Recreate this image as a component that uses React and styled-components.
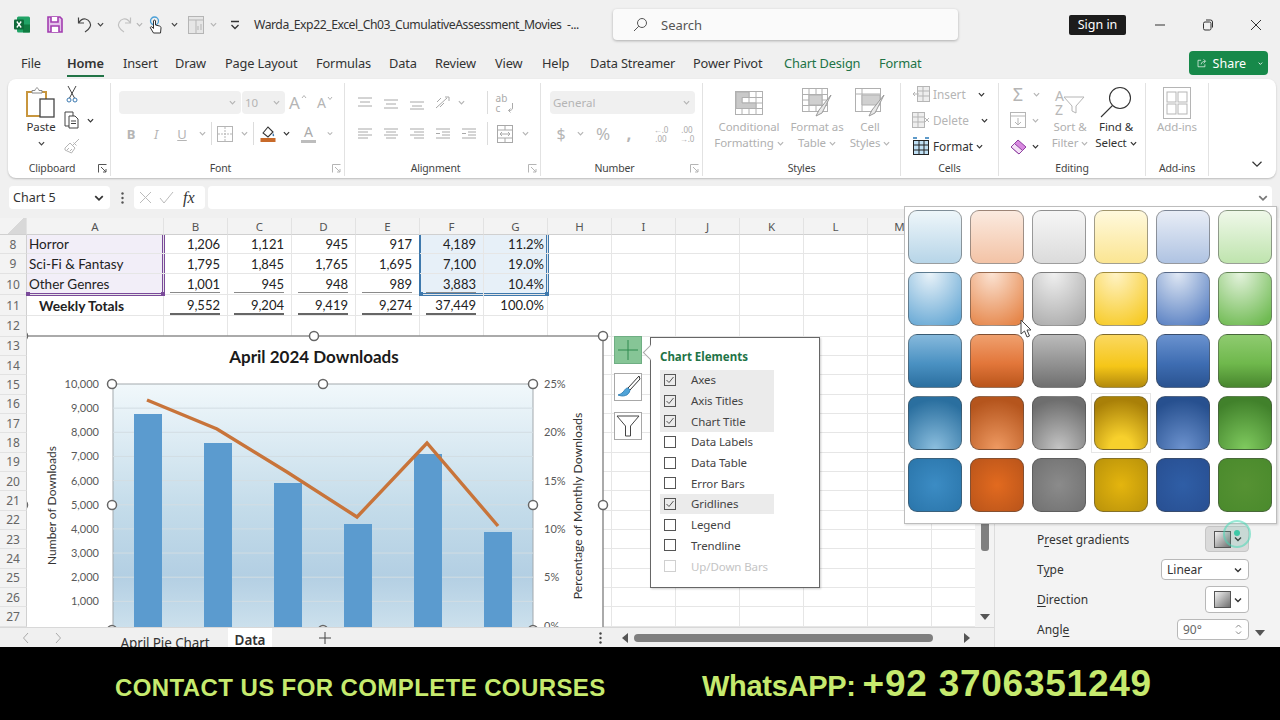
import React from 'react';
import styled, { createGlobalStyle } from 'styled-components';

const UI = '"Noto Sans", "Open Sans", sans-serif';
const CELL = 'Lato, "Noto Sans", sans-serif';

const GlobalStyle = createGlobalStyle`
  html, body { margin: 0; padding: 0; background: #000; }
  * { box-sizing: border-box; }
`;

const Page = styled.div`
  width: 1280px;
  height: 720px;
  position: relative;
  overflow: hidden;
  display: flex;
  flex-direction: column;
  background: #f0f0f0;
  font-family: ${UI};
  color: #333;
`;

/* ---------- title bar ---------- */
const TitleBar = styled.header`
  height: 46px;
  display: flex;
  align-items: center;
  padding: 3px 0 0 13px;
  flex: none;
`;
const Qat = styled.span`
  width: ${p => p.$w}px;
  margin-left: ${p => p.$ml || 0}px;
  flex: none;
  display: flex;
  align-items: center;
  justify-content: center;
`;
const DocName = styled.div`
  width: 359px;
  margin-left: 14px;
  flex: none;
  font-size: 12.2px;
  letter-spacing: -0.45px;
  color: #333;
  white-space: pre;
`;
const SearchBox = styled.div`
  width: 345px;
  height: 31px;
  flex: none;
  display: flex;
  align-items: center;
  gap: 13px;
  padding-left: 19px;
  background: #fafafa;
  border-radius: 4px;
  box-shadow: 0 1px 3px rgba(0, 0, 0, 0.28);
  font-size: 13px;
  color: #555;
`;
const SignIn = styled.div`
  width: 57px;
  height: 20px;
  margin-left: 111px;
  flex: none;
  background: #1c1c1c;
  color: #fff;
  border-radius: 2px;
  font-size: 12.5px;
  display: flex;
  align-items: center;
  justify-content: center;
`;
const WinButton = styled.span`
  width: 48px;
  flex: none;
  display: flex;
  justify-content: center;
  margin-left: ${p => p.$ml || 0}px;
`;

/* ---------- tabs ---------- */
const TabRow = styled.nav`
  height: 33px;
  flex: none;
  display: flex;
  align-items: center;
  padding-left: 21px;
  position: relative;
`;
const Tab = styled.span`
  width: ${p => p.$w}px;
  flex: none;
  font-size: 12.8px;
  letter-spacing: -0.15px;
  white-space: nowrap;
  color: ${p => (p.$green ? '#217346' : '#333')};
  font-weight: ${p => (p.$active ? 600 : 400)};
  position: relative;
  line-height: 24px;
  ${p =>
    p.$active &&
    `&::after {
      content: '';
      position: absolute;
      left: 0;
      width: 37px;
      bottom: -2px;
      height: 2px;
      background: #217346;
    }`}
`;
const ShareButton = styled.div`
  position: absolute;
  left: 1189px;
  top: 5px;
  width: 79px;
  height: 24px;
  border-radius: 4px;
  background: #17894a;
  color: #fff;
  font-size: 12.5px;
  display: flex;
  align-items: center;
  padding: 0 5px 0 8px;
  gap: 6px;
`;

/* ---------- ribbon ---------- */
const Ribbon = styled.div`
  height: 99px;
  flex: none;
  margin: 0 4px 0 8px;
  background: #fff;
  border-radius: 8px;
  box-shadow: 0 1px 2px rgba(0, 0, 0, 0.22);
  display: flex;
  padding: 4px 0 2px;
`;
const Group = styled.section`
  width: ${p => p.$w}px;
  flex: none;
  display: flex;
  flex-direction: column;
  border-right: 1px solid #e2e2e2;
`;
const GroupBody = styled.div`
  flex: 1;
  display: flex;
  flex-direction: ${p => (p.$col ? 'column' : 'row')};
  gap: ${p => p.$gap || 0}px;
  padding: ${p => p.$pt || 0}px 0 0 ${p => p.$pl || 0}px;
`;
const GroupLabel = styled.div`
  height: 16px;
  flex: none;
  font-size: 10.5px;
  letter-spacing: -0.15px;
  line-height: 16px;
  text-align: center;
  padding-right: ${p => p.$pr || 0}px;
  color: #444;
  position: relative;
`;
const Launcher = styled.span`
  position: absolute;
  right: 3px;
  top: 4px;
  display: flex;
`;
const ToolRow = styled.div`
  height: ${p => p.$h || 23}px;
  display: flex;
  align-items: center;
`;
const Tool = styled.span`
  width: ${p => p.$w}px;
  flex: none;
  height: 100%;
  display: flex;
  align-items: center;
  justify-content: center;
  font-size: ${p => p.$fs || 14}px;
  color: ${p => (p.$on ? '#444' : '#b5b5b5')};
`;
const Sep = styled.span`
  width: 1px;
  flex: none;
  height: ${p => p.$h || 23}px;
  margin: 0 ${p => p.$mr || 0}px 0 ${p => p.$ml || 0}px;
  background: #dcdcdc;
`;
const Combo = styled.span`
  width: ${p => p.$w}px;
  height: 23px;
  flex: none;
  margin-right: ${p => p.$mr || 0}px;
  background: #f0f0f0;
  border-radius: 4px;
  display: flex;
  align-items: center;
  justify-content: space-between;
  padding: 0 5px 0 3px;
  font-size: 11.5px;
  color: #b5b5b5;
`;
const GrowFont = styled.span`
  display: flex;
  align-items: flex-start;
  gap: 1px;
  line-height: 1;
`;
const ColorLetter = styled.span`
  width: 15px;
  display: flex;
  flex-direction: column;
  align-items: center;
  font-size: 14px;
  line-height: 14px;
  color: #aaa;
  &::after {
    content: '';
    width: 100%;
    height: 3px;
    margin-top: 1px;
    background: #bdbdbd;
  }
`;
const TinyStack = styled.span`
  display: flex;
  flex-direction: column;
  align-items: ${p => p.$align || 'center'};
  font-size: ${p => p.$fs || 8}px;
  line-height: ${p => p.$lh || 9}px;
  color: #aaa;
  white-space: nowrap;
`;
const WrapMark = styled.span`
  display: flex;
  align-items: flex-end;
  gap: 0;
`;
const BigTool = styled.div`
  width: ${p => p.$w}px;
  flex: none;
  display: flex;
  flex-direction: column;
  align-items: center;
  font-size: 11.5px;
  line-height: 16px;
  letter-spacing: -0.1px;
  white-space: nowrap;
  color: ${p => (p.$on ? '#333' : '#b0b0b0')};
`;
const BigIcon = styled.span`
  height: 33px;
  display: flex;
  align-items: center;
  justify-content: center;
  flex: none;
`;
const SortLetters = styled.span`
  display: flex;
  flex-direction: column;
  font-size: 14px;
  line-height: 14px;
  color: #b8b8b8;
  margin-right: -1px;
`;
const InlineLabel = styled.span`
  display: inline-flex;
  align-items: center;
  gap: 3px;
`;
const SmallColumn = styled.div`
  width: ${p => p.$w}px;
  flex: none;
  display: flex;
  flex-direction: column;
  gap: 4px;
  margin-top: ${p => p.$mt || 0}px;
`;
const CellTool = styled.div`
  height: 22px;
  display: flex;
  align-items: center;
  padding-left: ${p => p.$pl || 0}px;
  font-size: 11.8px;
  color: ${p => (p.$on ? '#333' : '#b5b5b5')};
  gap: ${p => p.$gap || 3}px;
`;
const ChevSlot = styled.span`
  display: flex;
  margin-left: ${p => p.$ml || 0}px;
`;
const Fill = styled.span`
  flex: 1;
`;
const CollapseSlot = styled.div`
  flex: 1;
  display: flex;
  justify-content: flex-end;
  align-items: flex-end;
  padding: 0 13px 6px 0;
`;

/* ---------- formula bar ---------- */
const FormulaBar = styled.div`
  height: 23px;
  flex: none;
  margin: 8px 8px 9px 9px;
  display: flex;
  align-items: stretch;
  font-size: 12.5px;
`;
const NameBox = styled.div`
  width: 101px;
  background: #fff;
  border-radius: 4px;
  display: flex;
  align-items: center;
  justify-content: space-between;
  padding: 0 6px 0 4px;
  color: #333;
`;
const Dots = styled.span`
  width: 24px;
  display: flex;
  align-items: center;
  justify-content: center;
`;
const FxBox = styled.div`
  width: 71px;
  background: #fff;
  border-radius: 4px;
  display: flex;
  align-items: center;
  gap: 7px;
  padding-left: 5px;
`;
const FxText = styled.span`
  font-family: "Liberation Serif", serif;
  font-style: italic;
  font-size: 16px;
  margin-left: 2px;
`;
const FormulaInput = styled.div`
  flex: 1;
  margin-left: 3px;
  background: #fff;
  border-radius: 4px;
  display: flex;
  align-items: center;
  justify-content: flex-end;
  padding-right: 4px;
`;

/* ---------- sheet ---------- */
const Workspace = styled.div`
  flex: 1;
  min-height: 0;
  display: flex;
`;
const LeftPane = styled.div`
  width: 994px;
  flex: none;
  display: flex;
  flex-direction: column;
`;
const GridWrap = styled.div`
  height: 409px;
  flex: none;
  display: flex;
`;
const SheetArea = styled.div`
  width: 975px;
  flex: none;
  position: relative;
  overflow: hidden;
  background: #fff;
  font-family: ${CELL};
`;
const SheetRow = styled.div`
  display: grid;
  grid-template-columns: 27px 137px repeat(13, 64px);
  height: ${p => p.$h}px;
`;
const ColHead = styled.div`
  background: #f3f3f3;
  border-right: 1px solid #e2e2e2;
  border-bottom: 1px solid #d0d0d0;
  font-family: ${UI};
  font-size: 11.5px;
  color: #555;
  display: flex;
  align-items: center;
  justify-content: center;
`;
const RowHead = styled.div`
  background: #f3f3f3;
  border-right: 1px solid #d0d0d0;
  border-bottom: 1px solid #e2e2e2;
  font-family: ${UI};
  font-size: 12px;
  color: #666;
  display: flex;
  align-items: center;
  justify-content: center;
`;
const Cell = styled.div`
  position: relative;
  border-right: 1px solid #e6e6e6;
  border-bottom: 1px solid #e6e6e6;
  font-size: ${p => (p.$bold ? 13.8 : p.$left ? 13.5 : 13)}px;
  font-weight: ${p => (p.$bold ? 700 : 400)};
  color: #222;
  display: flex;
  align-items: center;
  justify-content: ${p => (p.$left ? 'flex-start' : 'flex-end')};
  padding: 0 ${p => p.$pr || 3}px 0 ${p => p.$indent || 2}px;
  white-space: nowrap;
  background: ${p => p.$fill || 'transparent'};
  ${p => p.$edge && `box-shadow: ${p.$edge};`}
  ${p =>
    p.$under &&
    `&::after {
      content: '';
      position: absolute;
      left: 6px;
      right: 7px;
      bottom: ${p.$under === 2 ? 0 : 1}px;
      height: ${p.$under}px;
      background: ${p.$under === 2 ? '#666' : '#8a8a8a'};
    }`}
`;
const Corner = styled.i`
  position: absolute;
  bottom: -2px;
  ${p => (p.$side === 'left' ? 'left: -1px;' : 'right: -2px;')}
  width: 4px;
  height: 4px;
  background: ${p => p.$color};
  z-index: 2;
`;
const CornerTriangle = styled.span`
  display: block;
  width: 100%;
  height: 100%;
  background: linear-gradient(135deg, transparent 55%, #d8d8d8 55%);
`;
const ChartOverlay = styled.svg`
  position: absolute;
  left: 27px;
  top: 112px;
  display: block;
`;

/* floating chart buttons */
const ChartButton = styled.div`
  position: absolute;
  left: 614px;
  top: ${p => p.$top}px;
  width: 28px;
  height: 28px;
  border: 1px solid ${p => (p.$on ? '#6fae83' : '#a8a8a8')};
  background: ${p => (p.$on ? '#86c596' : '#fff')};
  display: flex;
  align-items: center;
  justify-content: center;
`;
const ElementsPanel = styled.div`
  position: absolute;
  left: 650px;
  top: 119px;
  width: 170px;
  height: 251px;
  background: #fff;
  border: 1px solid #666;
  box-shadow: 1px 1px 2px rgba(0, 0, 0, 0.2);
  padding: 10px 0 0 9px;
  font-family: ${UI};
  &::before {
    content: '';
    position: absolute;
    left: -6px;
    top: 9px;
    width: 10px;
    height: 10px;
    background: #fff;
    border-left: 1px solid #aaa;
    border-bottom: 1px solid #aaa;
    transform: rotate(45deg);
  }
`;
const PanelTitle = styled.div`
  height: 21.5px;
  font-size: 11.5px;
  font-weight: 700;
  color: #217346;
  line-height: 18px;
`;
const ElementRow = styled.div`
  width: 114px;
  height: 20.7px;
  display: flex;
  align-items: center;
  gap: 15px;
  padding-left: 4px;
  font-size: 11.5px;
  white-space: nowrap;
  letter-spacing: -0.1px;
  color: ${p => (p.$disabled ? '#c4c4c4' : '#444')};
  background: ${p => (p.$checked ? '#ebebeb' : 'transparent')};
`;
const CheckBox = styled.span`
  width: 12px;
  height: 12px;
  flex: none;
  border: 1px solid ${p => (p.$disabled ? '#d0d0d0' : '#555')};
  display: flex;
  align-items: center;
  justify-content: center;
`;

/* scrollbars + sheet tabs */
const VScroll = styled.div`
  flex: 1;
  position: relative;
  background: #f3f3f3;
`;
const VThumb = styled.div`
  position: absolute;
  left: 6px;
  top: 290px;
  width: 8px;
  height: 43px;
  background: #7f7f7f;
  border-radius: 3px;
`;
const VArrow = styled.span`
  position: absolute;
  left: 5px;
  top: 396px;
  width: 0;
  height: 0;
  border-left: 5px solid transparent;
  border-right: 5px solid transparent;
  border-top: 6px solid #555;
`;
const SheetTabs = styled.div`
  flex: 1;
  display: flex;
  align-items: stretch;
  overflow: hidden;
  background: #f0f0f0;
  border-top: 1px solid #d8d8d8;
`;
const TabArrow = styled.span`
  width: 32px;
  flex: none;
  display: flex;
  align-items: center;
  justify-content: center;
  margin-left: ${p => p.$ml || 0}px;
`;
const SheetTab = styled.div`
  width: ${p => p.$w}px;
  margin-left: ${p => p.$ml || 0}px;
  flex: none;
  font-size: 13.5px;
  text-align: center;
  white-space: nowrap;
  color: #333;
  line-height: ${p => (p.$active ? '24px' : '30px')};
  letter-spacing: -0.1px;
  font-weight: ${p => (p.$active ? 600 : 400)};
  background: ${p => (p.$active ? '#fff' : 'transparent')};
`;
const TabAdd = styled.span`
  width: 30px;
  margin-left: 38px;
  flex: none;
  display: flex;
  align-items: center;
  justify-content: center;
`;
const HScroll = styled.div`
  width: 348px;
  margin-left: 17px;
  flex: none;
  display: flex;
  align-items: center;
  gap: 6px;
`;
const HThumb = styled.span`
  width: 299px;
  height: 8px;
  border-radius: 4px;
  background: #7f7f7f;
`;
const HArrow = styled.span`
  width: 0;
  height: 0;
  border-top: 5px solid transparent;
  border-bottom: 5px solid transparent;
  ${p => (p.$right ? 'margin-left: auto; border-left: 6px solid #555;' : 'border-right: 6px solid #555;')}
`;
const TabDots = styled.span`
  width: 10px;
  margin-left: 255px;
  flex: none;
  display: flex;
  align-items: center;
  justify-content: center;
`;

/* format panel */
const FormatPanel = styled.aside`
  flex: 1;
  position: relative;
  background: #f3f3f3;
  border-left: 1px solid #dcdcdc;
  padding: 308px 31px 0 42px;
  display: flex;
  flex-direction: column;
`;
const FormatRow = styled.div`
  height: ${p => p.$h}px;
  margin-bottom: ${p => p.$mb}px;
  display: flex;
  align-items: center;
  justify-content: space-between;
  font-size: 12px;
  color: #333;
`;
const Mnemonic = styled.span`
  text-decoration: underline;
  text-underline-offset: 2px;
`;
const DropButton = styled.div`
  width: ${p => p.$w}px;
  height: 100%;
  background: ${p => (p.$pressed ? '#dadada' : '#fff')};
  border: 1px solid ${p => (p.$pressed ? '#c6c6c6' : '#b8b8b8')};
  border-radius: 4px;
  display: flex;
  align-items: center;
  justify-content: space-between;
  padding: 0 6px 0 ${p => p.$pl}px;
  font-size: 12px;
  color: ${p => (p.$muted ? '#666' : '#333')};
`;
const Swatchlet = styled.span`
  width: 17px;
  height: 17px;
  border: 1px solid #555;
  background: linear-gradient(135deg, #f3f3f3, #6f6f6f);
`;
const Spin = styled.span`
  display: flex;
  flex-direction: column;
  gap: 3px;
`;
const PanelArrow = styled.span`
  position: absolute;
  left: 260px;
  top: 412px;
  width: 0;
  height: 0;
  border-left: 5px solid transparent;
  border-right: 5px solid transparent;
  border-top: 6px solid #555;
`;

/* gradient gallery */
const Gallery = styled.div`
  position: absolute;
  left: 904px;
  top: 206px;
  width: 373px;
  height: 318px;
  background: #fff;
  border: 1px solid #bdbdbd;
  box-shadow: 1px 1px 2px rgba(0, 0, 0, 0.15);
  padding: 3px 3px 0;
  display: grid;
  grid-template-columns: repeat(6, 54px);
  grid-auto-rows: 54px;
  gap: 8px;
`;
const Swatch = styled.div`
  position: relative;
  border-radius: 9px;
  border: 1px solid rgba(70, 70, 70, 0.5);
  background: ${p => p.$bg};
  ${p =>
    p.$hover &&
    `&::after {
      content: '';
      position: absolute;
      inset: -4px;
      border: 1px solid #e6e6e6;
    }`}
`;
const Pointer = styled.svg`
  position: absolute;
  left: 1020px;
  top: 319px;
`;
const ClickRing = styled.div`
  position: absolute;
  left: 1223px;
  top: 520px;
  width: 28px;
  height: 28px;
  border-radius: 50%;
  border: 2px solid rgba(70, 215, 180, 0.5);
  background: rgba(70, 215, 180, 0.12);
  display: flex;
  align-items: center;
  justify-content: center;
  &::after {
    content: '';
    width: 6px;
    height: 6px;
    margin-top: -2px;
    border-radius: 50%;
    background: #3cc8a6;
  }
`;

/* banner */
const Banner = styled.footer`
  height: 73px;
  flex: none;
  background: #000;
  color: #c6ea6e;
  font-family: "Liberation Sans", Arial, sans-serif;
  font-weight: 700;
  display: flex;
  align-items: baseline;
  padding: 16px 0 0 115px;
  white-space: nowrap;
`;
const Contact = styled.span`
  width: 587px;
  flex: none;
  font-size: 24px;
  letter-spacing: 0.4px;
`;
const Whats = styled.span`
  font-size: 29px;
  letter-spacing: -0.3px;
`;
const Phone = styled.span`
  font-size: 37px;
  letter-spacing: 0.75px;
  margin-left: 7px;
`;

/* ---------- icons ---------- */
const Ico = ({ w = 16, h = 16, children, c = '#b5b5b5', sw = 1 }) => (
  <svg width={w} height={h} viewBox={`0 0 ${w} ${h}`} fill="none" stroke={c} strokeWidth={sw}>
    {children}
  </svg>
);
const Chev = ({ c = '#b5b5b5', s = 7, sw = 1.4 }) => (
  <svg width={s} height={s} viewBox="0 0 8 8" fill="none" stroke={c} strokeWidth={sw}>
    <path d="M1 2.5 4 5.5 7 2.5" />
  </svg>
);
const Caret = ({ up }) => (
  <svg width="6" height="5" viewBox="0 0 6 5" fill="none" stroke="#b5b5b5">
    <path d={up ? 'M1 4 3 1.500 5 4' : 'M1 1 3 3.500 5 1'} />
  </svg>
);
const Launch = ({ c = '#b5b5b5' }) => (
  <svg width="9" height="9" viewBox="0 0 9 9" fill="none" stroke={c}>
    <path d="M.5 8.5v-8h8M3 3l5 5M8 5v3H5" />
  </svg>
);
const Lines = ({ rows }) => (
  <Ico w={16} h={14} c="#a8a8a8">
    {rows.map(([x1, x2, y], i) => (
      <path key={i} d={`M${x1} ${y}H${x2}`} />
    ))}
  </Ico>
);
const ExcelLogo = () => (
  <svg width="16" height="17" viewBox="0 0 16 17">
    <rect x="3" y="0.5" width="13" height="16" rx="1.5" fill="#21a366" />
    <rect x="9" y="8.5" width="7" height="8" fill="#107c41" />
    <rect x="0" y="3.5" width="10" height="10" rx="1" fill="#0f6a3a" />
    <path d="M2.800 5.500 7.200 11.500M7.200 5.500 2.800 11.500" stroke="#fff" strokeWidth="1.300" />
  </svg>
);
const SaveIcon = () => (
  <svg width="16" height="17" viewBox="0 0 16 17" fill="#e3c2ea" stroke="#a23db0" strokeWidth="1.6">
    <path d="M1 1h12l2 2v13H1z" />
    <path d="M4 1v5h7V1M4 16v-6h8v6" fill="#fff" />
  </svg>
);
const UndoIcon = ({ c = '#444' }) => (
  <svg width="16" height="17" viewBox="0 0 16 17" fill="none" stroke={c} strokeWidth="1.2">
    <path d="M1.500 1.500v5.500H7M1.500 7c2-3 4.500-4.500 7-4 4 .8 6 5 4.500 8-1 2-2.500 3.500-5 5" />
  </svg>
);
const RedoIcon = () => (
  <svg width="16" height="17" viewBox="0 0 16 17" fill="none" stroke="#c0c0c0" strokeWidth="1.2">
    <path d="M14.500 1.500v5.500H9M14.500 7c-2-3-4.500-4.500-7-4-4 .8-6 5-4.500 8 1 2 2.500 3.500 5 5" />
  </svg>
);
const TouchIcon = () => (
  <svg width="14" height="18" viewBox="0 0 14 18" fill="none">
    <circle cx="5.500" cy="5" r="4" stroke="#4aa0d8" strokeWidth="1.3" />
    <path d="M4.500 17 1.500 12c-.5-1 .8-1.800 1.500-1l1.500 1.500V5c0-1.200 2-1.200 2 0v4l4 1c1.200.4 1.500 1 1.500 2l-.5 5z" fill="#fff" stroke="#333" />
  </svg>
);
const FormIcon = () => (
  <svg width="16" height="18" viewBox="0 0 16 18" fill="#e6e6e6" stroke="#b5b5b5">
    <rect x=".5" y=".5" width="15" height="17" />
    <path d="M1 4h14M8 4v13M10 14v-4M13 14V8" />
  </svg>
);
const PasteIcon = () => (
  <svg width="30" height="31" viewBox="0 0 30 31" fill="none">
    <path d="M1 5h19v24H1z" fill="#fff" stroke="#c8963e" strokeWidth="2" />
    <path d="M6 6V3.500h3C10 0 12 0 13 3.500h3V6z" fill="#fff" stroke="#888" />
    <rect x="14" y="12" width="14" height="18" fill="#fff" stroke="#444" strokeWidth="1.3" />
  </svg>
);
const ScissorsIcon = () => (
  <svg width="12" height="18" viewBox="0 0 12 18" fill="none" stroke="#444">
    <path d="M2 1l6.500 12M10 1 3.500 13" />
    <circle cx="3" cy="15" r="2" stroke="#3a78b0" />
    <circle cx="9" cy="15" r="2" stroke="#3a78b0" />
  </svg>
);
const CopyIcon = () => (
  <svg width="16" height="18" viewBox="0 0 16 18" fill="#fff" stroke="#444">
    <path d="M1 1h8v14H1z" />
    <path d="M5 5h6l3 3v9H5z" />
    <path d="M7 10h5M7 12.500h5" />
  </svg>
);
const BrushIcon = ({ c = '#b5b5b5' }) => (
  <svg width="16" height="16" viewBox="0 0 16 16" fill="none" stroke={c}>
    <path d="M15 1 8 8M9.500 4.500l3 3M1 10l5-5 5 5-3.500 5-6.500-3z" />
    <path d="M3 12l2-2M6 13l2-2" />
  </svg>
);
const BorderIcon = () => (
  <Ico w={16} h={16} c="#b5b5b5">
    <rect x=".5" y=".5" width="15" height="15" />
    <path d="M8 1v14M1 8h14" strokeDasharray="2 1" />
  </Ico>
);
const FillColor = () => (
  <svg width="16" height="18" viewBox="0 0 16 18">
    <path d="M3 8 8 2l5 5-5 5z" fill="#fff" stroke="#333" strokeWidth="1.1" />
    <path d="M13 8c1 1.500 1.500 2.200 1 3-.6.500-1.600 0-1.500-1z" fill="#3a78b0" />
    <rect x="0.500" y="13" width="15" height="4" fill="#c86a2a" />
  </svg>
);
const Rotate = () => (
  <Ico w={18} h={16} c="#a8a8a8">
    <path d="M2 13 13 3M11 2h4v4M3 7l4-4M6 12l4-4" />
  </Ico>
);
const Merge = () => (
  <Ico w={16} h={18} c="#a8a8a8">
    <rect x=".5" y=".5" width="15" height="17" />
    <path d="M1 5h14M1 13h14M8 1v4M8 13v4M3 9h10M3 9l2-2M3 9l2 2M13 9l-2-2M13 9l-2 2" />
  </Ico>
);
const CondIcon = () => (
  <svg width="28" height="24" viewBox="0 0 28 24" fill="#fff" stroke="#b0b0b0">
    <rect x=".5" y=".5" width="27" height="23" />
    <path d="M1 6.500h26M1 12h26M1 17.500h26M7 1v22M14 1v22M21 1v22" />
    <path d="M1 1h13v5.500H7V12h14v5.500H1z" fill="#c9c9c9" />
  </svg>
);
const TableIcon = () => (
  <svg width="30" height="30" viewBox="0 0 30 30" fill="#fff" stroke="#b0b0b0">
    <rect x=".5" y=".5" width="25" height="23" />
    <path d="M1 6.500h24M1 12h24M1 17.500h24M7 1v22M14 1v22M20 1v22" />
    <path d="M7 7h13v10H7z" fill="#d0d0d0" />
    <path d="M29 7 17 22l-3 6 6-3z" fill="#e8e8e8" stroke="#999" />
  </svg>
);
const CellStyleIcon = () => (
  <svg width="30" height="30" viewBox="0 0 30 30" fill="#fff" stroke="#b0b0b0">
    <rect x=".5" y=".5" width="25" height="23" />
    <path d="M1 6h24M7 1v22" />
    <path d="M7 7h18v10H7z" fill="#d0d0d0" />
    <path d="M29 7 17 22l-3 6 6-3z" fill="#e8e8e8" stroke="#999" />
  </svg>
);
const InsertIcon = () => (
  <Ico w={18} h={16} c="#b5b5b5">
    <rect x="5.500" y=".5" width="12" height="15" fill="#eee" />
    <path d="M6 5h11M6 10h11M11 1v14M1 8h6M3 6 1 8l2 2" />
  </Ico>
);
const DeleteIcon = () => (
  <Ico w={18} h={16} c="#b5b5b5">
    <rect x=".5" y=".5" width="12" height="15" fill="#eee" />
    <path d="M1 5h11M1 10h11M6 1v14M13 6l4 4M17 6l-4 4" />
  </Ico>
);
const FormatIcon = () => (
  <svg width="18" height="18" viewBox="0 0 18 18" fill="#bfe0f5" stroke="#222">
    <rect x="1.500" y="3.500" width="15" height="14" />
    <path d="M2 8h14M2 13h14M7 4v13M12 4v13" />
    <path d="M1 1h4M13 1h4" stroke="#2a7ab8" strokeWidth="1.400" />
  </svg>
);
const FillDown = () => (
  <Ico w={16} h={16} c="#b5b5b5">
    <rect x=".5" y=".5" width="15" height="15" />
    <path d="M1 4h14M8 6v7M5 10l3 3 3-3" />
  </Ico>
);
const Eraser = () => (
  <svg width="17" height="17" viewBox="0 0 17 17" stroke="#8e3fa0">
    <path d="M1 9 8 2l8 7-7 7z" fill="#d889e0" />
    <path d="M4.500 5.500l8 7-3.500 3.500-8-7z" fill="#f3e0f6" />
  </svg>
);
const Funnel = () => (
  <svg width="22" height="24" viewBox="0 0 22 24" fill="none" stroke="#b5b5b5">
    <path d="M1 6h20l-8 9v7l-4-2v-5z" />
  </svg>
);
const FindIcon = () => (
  <svg width="32" height="33" viewBox="0 0 32 33" fill="none" stroke="#333" strokeWidth="1.100">
    <circle cx="20" cy="12" r="10.500" />
    <path d="M12.500 19.500 1 31" />
  </svg>
);
const AddinIcon = () => (
  <svg width="28" height="32" viewBox="0 0 28 32" fill="none" stroke="#b5b5b5">
    <rect x=".5" y=".5" width="27" height="31" />
    <rect x="4" y="5" width="9" height="10" />
    <rect x="15" y="5" width="9" height="10" />
    <rect x="4" y="17" width="9" height="10" />
    <rect x="15" y="17" width="9" height="10" />
  </svg>
);

const bars = [
  { x: 134, top: 414 },
  { x: 204, top: 443 },
  { x: 274, top: 483 },
  { x: 344, top: 524 },
  { x: 414, top: 454 },
  { x: 484, top: 532 }
];
const leftAxis = ['10,000', '9,000', '8,000', '7,000', '6,000', '5,000', '4,000', '3,000', '2,000', '1,000'];
const rightAxis = ['25%', '20%', '15%', '10%', '5%', '0%'];

const Handle = ({ x, y }) => <circle cx={x} cy={y} r="4.500" fill="#fff" stroke="#666" strokeWidth="1.500" />;

const Chart = () => (
  <ChartOverlay width="590" height="297" viewBox="27 330 590 297">
    <defs>
      <linearGradient id="plot" x1="0" y1="0" x2="0" y2="1">
        <stop offset="0" stopColor="#f1f8fb" />
        <stop offset="0.5" stopColor="#c4dcea" />
        <stop offset="0.78" stopColor="#b3cfe3" />
        <stop offset="1" stopColor="#cde1ed" />
      </linearGradient>
    </defs>
    <rect x="27" y="336" width="576" height="291" fill="#fff" />
    <path d="M27 336H603V627" stroke="#8f8f8f" strokeWidth="1.500" fill="none" />
    <text x="314" y="363" textAnchor="middle" fontSize="17" fontWeight="700" fill="#1a1a1a" fontFamily={CELL}>April 2024 Downloads</text>
    <rect x="113" y="384" width="420" height="246" fill="url(#plot)" stroke="#a3a9ad" />
    {leftAxis.map((t, i) => {
      const y = 384 + i * 24.15;
      return (
        <g key={t}>
          {i > 0 && <path d={`M113 ${y}H533`} stroke="#d2dde3" />}
          <text x="99" y={y + 4} textAnchor="end" fontSize="11" fill="#595959" fontFamily={CELL}>{t}</text>
        </g>
      );
    })}
    {rightAxis.map((t, i) => (
      <text key={t} x="544" y={384 + i * 48.3 + 4} fontSize="11" fill="#595959" fontFamily={CELL}>{t}</text>
    ))}
    {bars.map(b => (
      <rect key={b.x} x={b.x} y={b.top} width="28" height={627 - b.top} fill="#5b9bcf" />
    ))}
    <polyline points="147,400 217,429 287,472 357,517 427,443 498,526" fill="none" stroke="#c8743a" strokeWidth="3.400" strokeLinejoin="miter" />
    <text transform="translate(56 505.500) rotate(-90)" textAnchor="middle" fontSize="12" fill="#333" fontFamily={CELL}>Number of Downloads</text>
    <text transform="translate(582 506) rotate(-90)" textAnchor="middle" fontSize="12.300" fill="#333" fontFamily={CELL}>Percentage of Monthly Downloads</text>
    <Handle x={314} y={336} />
    <Handle x={603} y={336} />
    <Handle x={23} y={336} />
    <Handle x={23} y={505} />
    <Handle x={603} y={505} />
    <Handle x={112} y={384} />
    <Handle x={323} y={384} />
    <Handle x={533} y={384} />
    <Handle x={112} y={505} />
    <Handle x={533} y={505} />
    <Handle x={112} y={630} />
    <Handle x={323} y={630} />
    <Handle x={533} y={630} />
  </ChartOverlay>
);

const PURPLE = '#7a4a9a';
const BLUE = '#3f79ad';
const purpleFill = '#f2eef8';
const blueFill = '#e7f0f8';

const sheetData = [
  { n: 8, h: 19, a: 'Horror', v: ['1,206', '1,121', '945', '917', '4,189', '11.2%'] },
  { n: 9, h: 20, a: 'Sci-Fi & Fantasy', v: ['1,795', '1,845', '1,765', '1,695', '7,100', '19.0%'] },
  { n: 10, h: 21, a: 'Other Genres', v: ['1,001', '945', '948', '989', '3,883', '10.4%'], under: 1, last: true },
  { n: 11, h: 21, a: 'Weekly Totals', v: ['9,552', '9,204', '9,419', '9,274', '37,449', '100.0%'], under: 2, total: true }
];
const letters = ['A', 'B', 'C', 'D', 'E', 'F', 'G', 'H', 'I', 'J', 'K', 'L', 'M', 'N'];

const blanks = count => Array.from({ length: count }, (_, i) => <Cell key={i} />);

const DataRow = ({ row }) => (
  <SheetRow $h={row.h}>
    <RowHead>{row.n}</RowHead>
    {row.total ? (
      <Cell $left $bold $indent={12}>{row.a}</Cell>
    ) : (
      <Cell
        $left
        $fill={purpleFill}
        $edge={`1px 0 0 ${PURPLE}, inset -1px 0 0 ${PURPLE}${row.last ? `, 0 1px 0 ${PURPLE}, inset 0 -1px 0 ${PURPLE}` : ''}`}
      >
        {row.a}
        {row.last && <Corner $side="left" $color={PURPLE} />}
        {row.last && <Corner $side="right" $color={PURPLE} />}
      </Cell>
    )}
    {row.v.map((val, i) => {
      const inBlue = !row.total && i >= 4;
      let edge;
      if (inBlue) {
        const parts = [];
        if (i === 4) parts.push(`-1px 0 0 ${BLUE}, inset 1px 0 0 ${BLUE}`);
        if (i === 5) parts.push(`1px 0 0 ${BLUE}, inset -1px 0 0 ${BLUE}`);
        if (row.last) parts.push(`0 1px 0 ${BLUE}, inset 0 -1px 0 ${BLUE}`);
        edge = parts.join(', ');
      }
      return (
        <Cell key={i} $pr={i === 5 ? 3 : 7} $fill={inBlue ? blueFill : undefined} $edge={edge} $under={i === 5 ? 0 : row.under}>
          {val}
          {inBlue && row.last && i === 4 && <Corner $side="left" $color={BLUE} />}
          {inBlue && row.last && i === 5 && <Corner $side="right" $color={BLUE} />}
        </Cell>
      );
    })}
    {blanks(7)}
  </SheetRow>
);

const elements = [
  ['Axes', true],
  ['Axis Titles', true],
  ['Chart Title', true],
  ['Data Labels', false],
  ['Data Table', false],
  ['Error Bars', false],
  ['Gridlines', true],
  ['Legend', false],
  ['Trendline', false],
  ['Up/Down Bars', false, true]
];

const swatches = [
  ['#eef6fa,#b7d5e8', '#fbeadf,#f3c3a6', '#f6f6f6,#dbdbdb', '#fff9dd,#fbe592', '#e8edf6,#afc3e2', '#eff8e9,#bfe4ae'].map(
    s => `linear-gradient(180deg,${s})`
  ),
  ['#eaf3f9,#68a9d5', '#fbe3d3,#e6874b', '#f0f0f0,#adadad', '#fff3c6,#f7cb27', '#e0e8f4,#5a81c3', '#e5f3de,#70bb53'].map(
    s => `radial-gradient(ellipse 90% 110% at 40% 0%,${s})`
  ),
  ['#86b9dc,#4a91c2 55%,#2b6f9f', '#f0a06e,#e2763a 55%,#b9551b', '#bbb,#929292 55%,#6f6f6f', '#fbd860,#f5c618 60%,#b38a0c', '#6a92cf,#3e6db2 55%,#2a5391', '#8fcb70,#6fb84c 55%,#48862e'].map(
    s => `linear-gradient(180deg,${s})`
  ),
  ['#8cbfdf,#2a6f9f', '#ef9a62,#b5551d', '#c5c5c5,#6e6e6e', '#f7d02c 25%,#a98008', '#6d93cf,#27508f', '#80cb5f,#41812b'].map(
    s => `radial-gradient(ellipse 85% 95% at 50% 100%,${s})`
  ),
  ['#3c8cc4,#2a75aa', '#e26a1f,#b9541a', '#8b8b8b,#717171', '#e4b50e,#b9920a', '#2f5ea6,#284f92', '#569233,#4a8a2c'].map(
    s => `radial-gradient(ellipse at 50% 50%,${s})`
  )
];

export default function App() {
  return (
    <Page>
      <GlobalStyle />
      <TitleBar>
        <Qat $w={18}><ExcelLogo /></Qat>
        <Qat $w={40} $ml={4}><SaveIcon /></Qat>
        <Qat $w={20}><UndoIcon /></Qat>
        <Qat $w={10}><Chev c="#444" /></Qat>
        <Qat $w={16} $ml={11}><RedoIcon /></Qat>
        <Qat $w={8} $ml={3}><Chev /></Qat>
        <Qat $w={14} $ml={6}><TouchIcon /></Qat>
        <Qat $w={8} $ml={7}><Chev c="#444" /></Qat>
        <Qat $w={16} $ml={10}><FormIcon /></Qat>
        <Qat $w={8} $ml={5}><Chev /></Qat>
        <Qat $w={10} $ml={13}>
          <svg width="10" height="10" viewBox="0 0 10 10" fill="none" stroke="#333" strokeWidth="1.300">
            <path d="M1 1.500h8M1.500 5 5 8.500 8.500 5" />
          </svg>
        </Qat>
        <DocName>Warda_Exp22_Excel_Ch03_CumulativeAssessment_Movies  -...</DocName>
        <SearchBox>
          <svg width="16" height="16" viewBox="0 0 16 16" fill="none" stroke="#555">
            <circle cx="10" cy="6" r="4.500" />
            <path d="M6.800 9.200 2 14" />
          </svg>
          Search
        </SearchBox>
        <SignIn>Sign in</SignIn>
        <WinButton $ml={10}>
          <svg width="12" height="12" viewBox="0 0 12 12" stroke="#333"><path d="M1 6h10" /></svg>
        </WinButton>
        <WinButton>
          <svg width="12" height="12" viewBox="0 0 12 12" fill="none" stroke="#333">
            <rect x="1.500" y="3" width="7.500" height="8" rx="1.500" />
            <path d="M4 1h4.500A2 2 0 0 1 10.500 3v5.500" />
          </svg>
        </WinButton>
        <WinButton>
          <svg width="12" height="12" viewBox="0 0 12 12" stroke="#333"><path d="M1 1l10 10M11 1 1 11" /></svg>
        </WinButton>
      </TitleBar>

      <TabRow>
        <Tab $w={46}>File</Tab>
        <Tab $w={56} $active>Home</Tab>
        <Tab $w={52}>Insert</Tab>
        <Tab $w={50}>Draw</Tab>
        <Tab $w={91}>Page Layout</Tab>
        <Tab $w={73}>Formulas</Tab>
        <Tab $w={46}>Data</Tab>
        <Tab $w={60}>Review</Tab>
        <Tab $w={47}>View</Tab>
        <Tab $w={48}>Help</Tab>
        <Tab $w={103}>Data Streamer</Tab>
        <Tab $w={91}>Power Pivot</Tab>
        <Tab $w={95} $green>Chart Design</Tab>
        <Tab $w={60} $green>Format</Tab>
        <ShareButton>
          <svg width="14" height="14" viewBox="0 0 14 14" fill="none" stroke="#fff">
            <path d="M6 3H1.500v9.500h10V9M6 9c.5-3 2.500-4.500 6-4.500M9.500 1.500l3 3-3 3" />
          </svg>
          Share
          <Fill />
          <Chev c="#fff" />
        </ShareButton>
      </TabRow>

      <Ribbon>
        <Group $w={103}>
          <GroupBody $pl={14} $pt={3}>
            <BigTool $w={38} $on>
              <BigIcon><PasteIcon /></BigIcon>
              <span>Paste</span>
              <ToolRow $h={16}><Chev c="#444" /></ToolRow>
            </BigTool>
            <SmallColumn $w={40} $mt={-3}>
              <CellTool $pl={6}><ScissorsIcon /></CellTool>
              <CellTool $pl={4} $gap={7}><CopyIcon /><Chev c="#333" /></CellTool>
              <CellTool $pl={4}><BrushIcon /></CellTool>
            </SmallColumn>
          </GroupBody>
          <GroupLabel $pr={14}>Clipboard<Launcher><Launch c="#555" /></Launcher></GroupLabel>
        </Group>

        <Group $w={234}>
          <GroupBody $col $pt={8} $gap={8} $pl={8}>
            <ToolRow>
              <Combo $w={122} $mr={1}><span /><Chev /></Combo>
              <Combo $w={43}>10<Chev /></Combo>
              <Tool $w={26} $fs={17}><GrowFont>A<Caret up /></GrowFont></Tool>
              <Tool $w={28} $fs={14}><GrowFont>A<Caret /></GrowFont></Tool>
            </ToolRow>
            <ToolRow>
              <Tool $w={24} $fs={13}><b>B</b></Tool>
              <Tool $w={26} $fs={13}><i>I</i></Tool>
              <Tool $w={26} $fs={13}><u>U</u></Tool>
              <Tool $w={14}><Chev /></Tool>
              <Sep $ml={2} />
              <Tool $w={26}><BorderIcon /></Tool>
              <Tool $w={13}><Chev /></Tool>
              <Sep $ml={2} />
              <Tool $w={28}><FillColor /></Tool>
              <Tool $w={8}><Chev c="#333" /></Tool>
              <Tool $w={37}><ColorLetter>A</ColorLetter></Tool>
              <Tool $w={6}><Chev /></Tool>
            </ToolRow>
          </GroupBody>
          <GroupLabel $pr={14}>Font<Launcher><Launch /></Launcher></GroupLabel>
        </Group>

        <Group $w={196}>
          <GroupBody $col $pt={8} $gap={8} $pl={7}>
            <ToolRow>
              <Tool $w={26}><Lines rows={[[1, 15, 2], [3, 13, 6], [1, 15, 10]]} /></Tool>
              <Tool $w={26}><Lines rows={[[1, 15, 4], [3, 13, 8], [1, 15, 12]]} /></Tool>
              <Tool $w={26}><Lines rows={[[1, 15, 6], [3, 13, 10], [1, 15, 13]]} /></Tool>
              <Tool $w={26}><Rotate /></Tool>
              <Tool $w={10}><Chev /></Tool>
              <Sep $ml={21} $mr={4} />
              <Tool $w={26}>
                <WrapMark>
                  <TinyStack $fs={10} $lh={10} $align="flex-start"><span>ab</span><span>c</span></TinyStack>
                  <svg width="7" height="10" viewBox="0 0 7 10" fill="none" stroke="#aaa">
                    <path d="M5.500 0v5c0 2-2 2.500-4 2.500M1.500 7.500l2-2M1.500 7.500l2 2" />
                  </svg>
                </WrapMark>
              </Tool>
            </ToolRow>
            <ToolRow>
              <Tool $w={26}><Lines rows={[[1, 15, 2], [1, 11, 5], [1, 15, 8], [1, 11, 11]]} /></Tool>
              <Tool $w={26}><Lines rows={[[1, 15, 2], [3, 13, 5], [1, 15, 8], [3, 13, 11]]} /></Tool>
              <Tool $w={26}><Lines rows={[[1, 15, 2], [5, 15, 5], [1, 15, 8], [5, 15, 11]]} /></Tool>
              <Tool $w={26}><Lines rows={[[1, 15, 2], [7, 15, 5], [7, 15, 8], [1, 15, 11], [1, 5, 6.5]]} /></Tool>
              <Tool $w={26}><Lines rows={[[1, 15, 2], [7, 15, 5], [7, 15, 8], [1, 15, 11], [1, 5, 6.5]]} /></Tool>
              <Sep $ml={5} $mr={4} />
              <Tool $w={26}><Merge /></Tool>
              <Tool $w={14}><Chev /></Tool>
            </ToolRow>
          </GroupBody>
          <GroupLabel $pr={14}>Alignment<Launcher><Launch /></Launcher></GroupLabel>
        </Group>

        <Group $w={162}>
          <GroupBody $col $pt={8} $gap={8} $pl={9}>
            <ToolRow>
              <Combo $w={145}>General<Chev /></Combo>
            </ToolRow>
            <ToolRow>
              <Tool $w={22} $fs={16}>$</Tool>
              <Tool $w={16}><Chev /></Tool>
              <Tool $w={30} $fs={17}>%</Tool>
              <Tool $w={22} $fs={17}><b>,</b></Tool>
              <Tool $w={6} />
              <Tool $w={30}><TinyStack><span>←.0</span><span>.00</span></TinyStack></Tool>
              <Tool $w={22}><TinyStack><span>.00</span><span>→.0</span></TinyStack></Tool>
            </ToolRow>
          </GroupBody>
          <GroupLabel $pr={14}>Number<Launcher><Launch /></Launcher></GroupLabel>
        </Group>

        <Group $w={198}>
          <GroupBody $pt={3} $pl={5}>
            <BigTool $w={82}>
              <BigIcon><CondIcon /></BigIcon>
              <span>Conditional</span>
              <InlineLabel>Formatting <Chev /></InlineLabel>
            </BigTool>
            <BigTool $w={54}>
              <BigIcon><TableIcon /></BigIcon>
              <span>Format as</span>
              <InlineLabel>Table <Chev /></InlineLabel>
            </BigTool>
            <BigTool $w={52}>
              <BigIcon><CellStyleIcon /></BigIcon>
              <span>Cell</span>
              <InlineLabel>Styles <Chev /></InlineLabel>
            </BigTool>
          </GroupBody>
          <GroupLabel>Styles</GroupLabel>
        </Group>

        <Group $w={98}>
          <GroupBody $pl={11}>
            <SmallColumn $w={78}>
              <CellTool><InsertIcon />Insert<ChevSlot $ml={9}><Chev c="#333" /></ChevSlot></CellTool>
              <CellTool><DeleteIcon />Delete<ChevSlot $ml={9}><Chev c="#333" /></ChevSlot></CellTool>
              <CellTool $on><FormatIcon />Format<Chev c="#333" /></CellTool>
            </SmallColumn>
          </GroupBody>
          <GroupLabel>Cells</GroupLabel>
        </Group>

        <Group $w={147}>
          <GroupBody $pl={11} $pt={3}>
            <SmallColumn $w={37} $mt={-3}>
              <CellTool $gap={7}>
                <Tool $w={16} $fs={18}>Σ</Tool>
                <Chev />
              </CellTool>
              <CellTool $gap={6}><FillDown /><Chev /></CellTool>
              <CellTool $gap={5}><Eraser /><Chev c="#333" /></CellTool>
            </SmallColumn>
            <BigTool $w={46}>
              <BigIcon>
                <SortLetters><span>A</span><span>Z</span></SortLetters>
                <Funnel />
              </BigIcon>
              <span>Sort &amp;</span>
              <InlineLabel>Filter <Chev /></InlineLabel>
            </BigTool>
            <BigTool $w={46} $on>
              <BigIcon><FindIcon /></BigIcon>
              <span>Find &amp;</span>
              <InlineLabel>Select <Chev c="#333" /></InlineLabel>
            </BigTool>
          </GroupBody>
          <GroupLabel>Editing</GroupLabel>
        </Group>

        <Group $w={63}>
          <GroupBody $pt={3}>
            <BigTool $w={62}>
              <BigIcon><AddinIcon /></BigIcon>
              <span>Add-ins</span>
            </BigTool>
          </GroupBody>
          <GroupLabel>Add-ins</GroupLabel>
        </Group>

        <CollapseSlot><Chev c="#333" s={12} sw={0.8} /></CollapseSlot>
      </Ribbon>

      <FormulaBar>
        <NameBox>Chart 5<Chev c="#333" s={10} /></NameBox>
        <Dots>
          <svg width="3" height="12" viewBox="0 0 3 12" fill="#555">
            <circle cx="1.500" cy="1.500" r="1.200" />
            <circle cx="1.500" cy="6" r="1.200" />
            <circle cx="1.500" cy="10.500" r="1.200" />
          </svg>
        </Dots>
        <FxBox>
          <svg width="13" height="13" viewBox="0 0 13 13" stroke="#bbb"><path d="M1 1l11 11M12 1 1 12" /></svg>
          <svg width="15" height="13" viewBox="0 0 15 13" fill="none" stroke="#bbb"><path d="M1 7l4 5L14 1" /></svg>
          <FxText>fx</FxText>
        </FxBox>
        <FormulaInput><Chev s={10} c="#777" /></FormulaInput>
      </FormulaBar>

      <Workspace>
        <LeftPane>
          <GridWrap>
            <SheetArea>
              <SheetRow $h={17}>
                <ColHead><CornerTriangle /></ColHead>
                {letters.map(l => <ColHead key={l}>{l}</ColHead>)}
              </SheetRow>
              {sheetData.map(row => <DataRow key={row.n} row={row} />)}
              <SheetRow $h={20.5}>
                <RowHead>12</RowHead>
                {blanks(14)}
              </SheetRow>
              {Array.from({ length: 15 }, (_, i) => (
                <SheetRow key={i} $h={19.35}>
                  <RowHead>{13 + i}</RowHead>
                  {blanks(14)}
                </SheetRow>
              ))}
              <Chart />
              <ChartButton $top={118} $on>
                <svg width="26" height="26" viewBox="0 0 26 26" stroke="#2f8a4f"><path d="M13 3v20M3 13h20" /></svg>
              </ChartButton>
              <ChartButton $top={155}>
                <svg width="26" height="26" viewBox="0 0 26 26">
                  <path d="M24 2 13 14l2 2L25 5z" fill="#fff" stroke="#333" />
                  <path d="M13 14c-4 0-3 5-10 7 5 2 11 1 12-5z" fill="#4fa3d8" stroke="#3a86b8" />
                </svg>
              </ChartButton>
              <ChartButton $top={194}>
                <svg width="26" height="26" viewBox="0 0 26 26" fill="none" stroke="#444">
                  <path d="M2 3h22l-8.500 10v10h-5V13z" />
                </svg>
              </ChartButton>
              <ElementsPanel>
                <PanelTitle>Chart Elements</PanelTitle>
                {elements.map(([label, on, disabled]) => (
                  <ElementRow key={label} $checked={on} $disabled={disabled}>
                    <CheckBox $disabled={disabled}>
                      {on && (
                        <svg width="10" height="10" viewBox="0 0 10 10" fill="none" stroke="#555">
                          <path d="M1.500 5 4 7.500 8.500 2" />
                        </svg>
                      )}
                    </CheckBox>
                    {label}
                  </ElementRow>
                ))}
              </ElementsPanel>
            </SheetArea>
            <VScroll>
              <VThumb />
              <VArrow />
            </VScroll>
          </GridWrap>
          <SheetTabs>
            <TabArrow $ml={10}><svg width="8" height="12" viewBox="0 0 8 12" fill="none" stroke="#aaa"><path d="M6 1 1.500 6 6 11" /></svg></TabArrow>
            <TabArrow><svg width="8" height="12" viewBox="0 0 8 12" fill="none" stroke="#aaa"><path d="M2 1l4.500 5L2 11" /></svg></TabArrow>
            <SheetTab $w={110} $ml={36}>April Pie Chart</SheetTab>
            <SheetTab $w={44} $ml={8} $active>Data</SheetTab>
            <TabAdd>
              <svg width="12" height="12" viewBox="0 0 12 12" stroke="#444"><path d="M6 0v12M0 6h12" /></svg>
            </TabAdd>
            <TabDots>
              <svg width="3" height="12" viewBox="0 0 3 12" fill="#444">
                <circle cx="1.500" cy="1.500" r="1.200" />
                <circle cx="1.500" cy="6" r="1.200" />
                <circle cx="1.500" cy="10.500" r="1.200" />
              </svg>
            </TabDots>
            <HScroll>
              <HArrow />
              <HThumb />
              <HArrow $right />
            </HScroll>
          </SheetTabs>
        </LeftPane>
        <FormatPanel>
          <FormatRow $h={26} $mb={7}>
            <span>P<Mnemonic>r</Mnemonic>eset gradients</span>
            <DropButton $w={44} $pl={8} $pressed><Swatchlet /><Chev c="#333" s={8} /></DropButton>
          </FormatRow>
          <FormatRow $h={21} $mb={6}>
            <span>T<Mnemonic>y</Mnemonic>pe</span>
            <DropButton $w={88} $pl={5}>Linear<Chev c="#333" s={8} /></DropButton>
          </FormatRow>
          <FormatRow $h={27} $mb={6}>
            <span><Mnemonic>D</Mnemonic>irection</span>
            <DropButton $w={44} $pl={8}><Swatchlet /><Chev c="#333" s={8} /></DropButton>
          </FormatRow>
          <FormatRow $h={21} $mb={0}>
            <span>Angl<Mnemonic>e</Mnemonic></span>
            <DropButton $w={72} $pl={5} $muted>
              90°
              <Spin>
                <svg width="7" height="4" viewBox="0 0 7 4" fill="none" stroke="#888"><path d="M1 3.500 3.500 1 6 3.500" /></svg>
                <svg width="7" height="4" viewBox="0 0 7 4" fill="none" stroke="#888"><path d="M1 .5 3.500 3 6 .5" /></svg>
              </Spin>
            </DropButton>
          </FormatRow>
          <PanelArrow />
        </FormatPanel>
      </Workspace>

      <Banner>
        <Contact>CONTACT US FOR COMPLETE COURSES</Contact>
        <Whats>WhatsAPP:</Whats>
        <Phone>+92 3706351249</Phone>
      </Banner>

      <Gallery>
        {swatches.flatMap((row, r) =>
          row.map((bg, c) => <Swatch key={`${r}-${c}`} $bg={bg} $hover={r === 3 && c === 3} />)
        )}
      </Gallery>
      <Pointer width="13" height="20" viewBox="0 0 13 20">
        <path d="M1 1v14l3.500-3 2.500 6 2.500-1-2.500-6H11z" fill="#fff" stroke="#444" />
      </Pointer>
      <ClickRing />
    </Page>
  );
}
